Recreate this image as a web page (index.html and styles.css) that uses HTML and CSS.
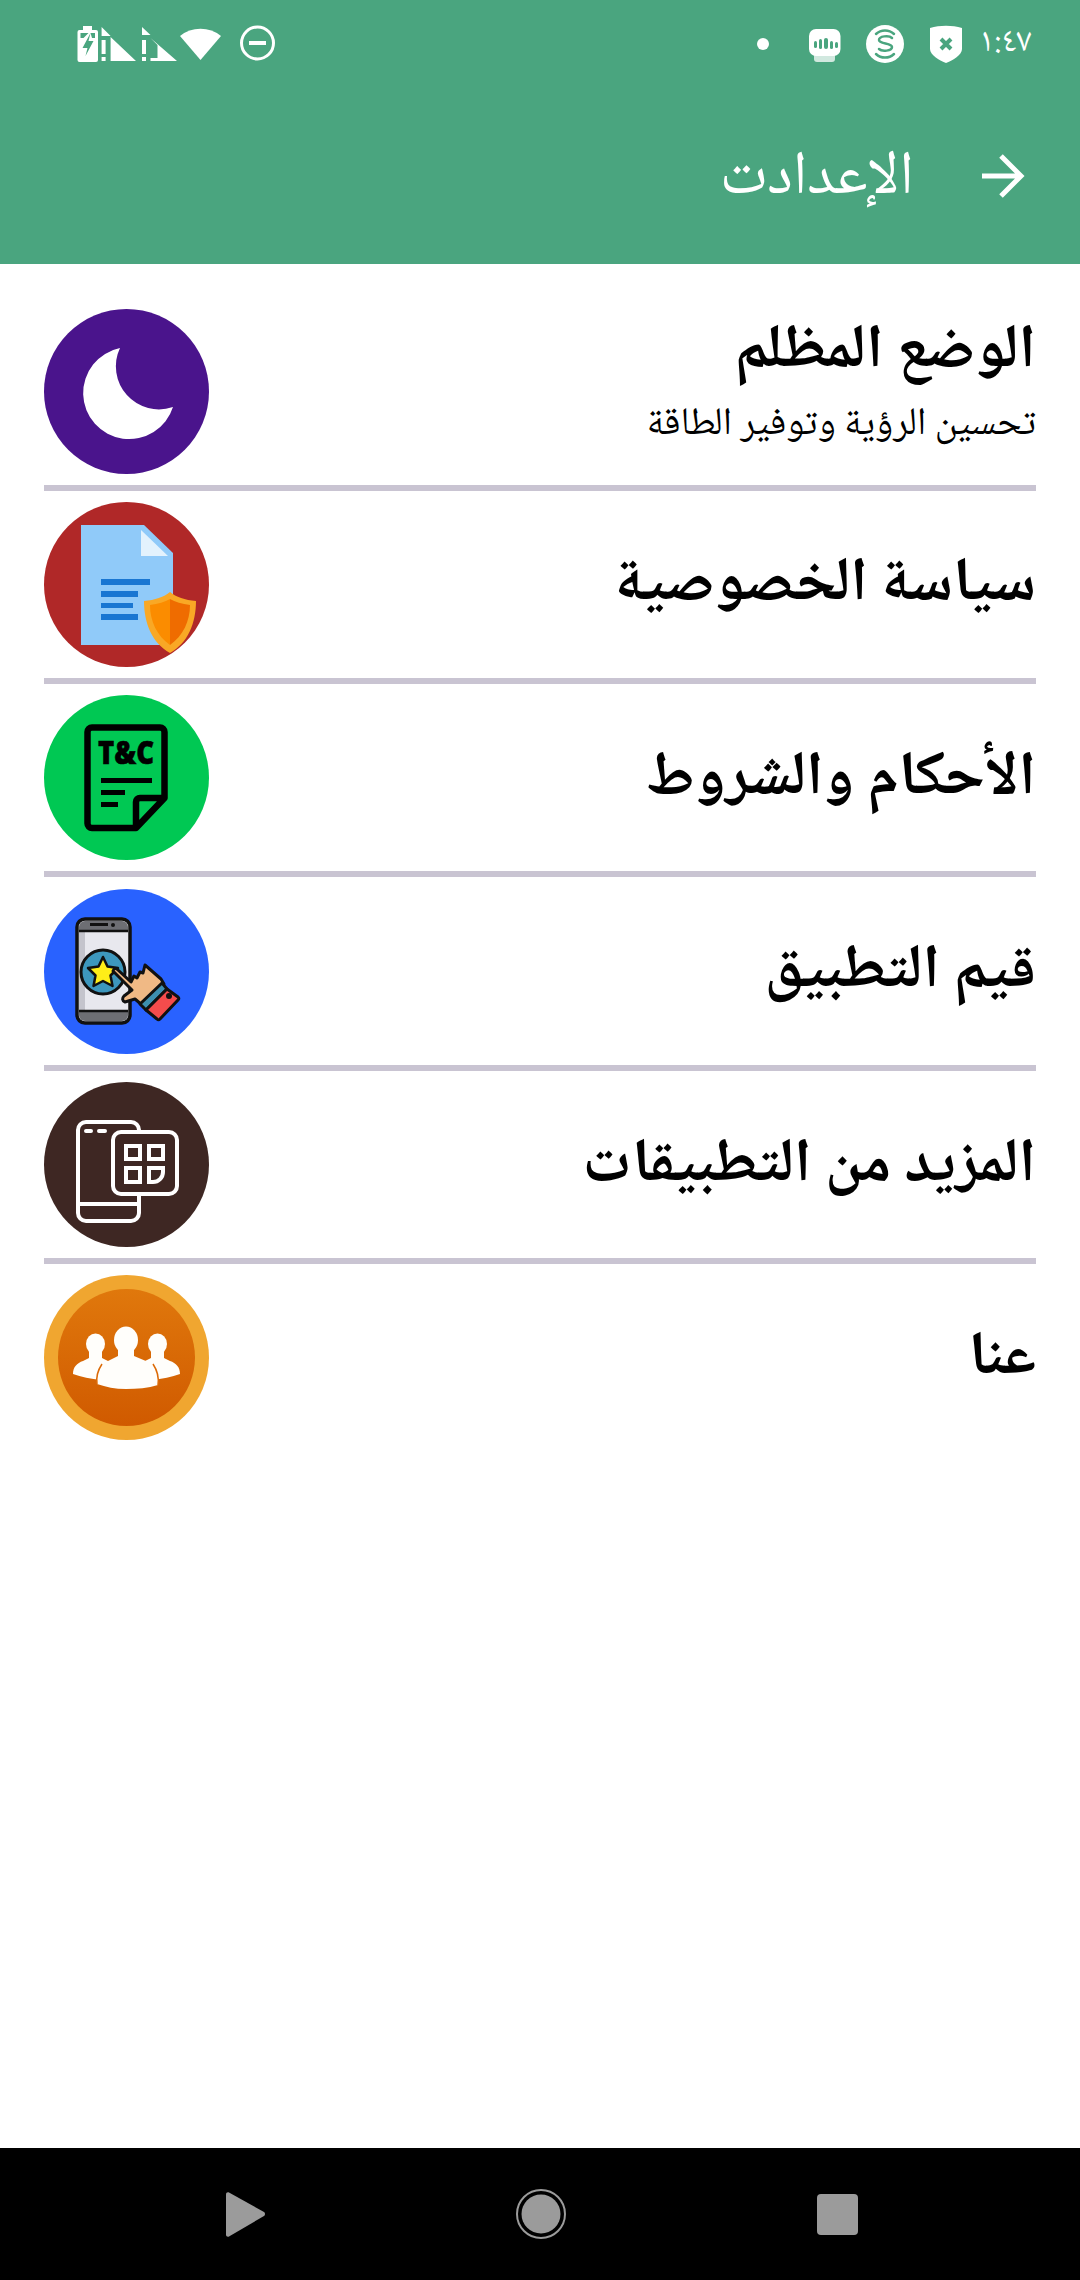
FILE: index.html
```html
<!DOCTYPE html>
<html lang="ar" dir="rtl">
<head>
<meta charset="utf-8">
<title>الإعدادت</title>
<link rel="stylesheet" href="styles.css">
</head>
<body>
<header class="top">
  <div class="status">
    <div class="status-right">
      <span class="time" dir="ltr">١:٤٧</span>
      <svg class="notifs" width="205" height="38" viewBox="757 25 205 38">
        <circle cx="763" cy="44" r="6" fill="#fff"/>
        <rect x="814" y="52" width="21" height="10" rx="3" fill="#fff" opacity=".75"/>
        <rect x="809" y="29" width="31.500" height="27" rx="7" fill="#fff"/>
        <g fill="#4aa57f"><rect x="814" y="41" width="3" height="7" rx="1.500"/><rect x="819" y="39" width="3" height="10" rx="1.500"/><rect x="824" y="38" width="4" height="11" rx="2"/><rect x="830" y="41" width="3" height="8" rx="1.500"/><rect x="835" y="42" width="3" height="6" rx="1.500"/></g>
        <circle cx="885" cy="44" r="19" fill="#fff"/>
        <g fill="none" stroke="#4aa57f" stroke-width="2.500" stroke-linecap="round"><path d="M876 34a13 13 0 0 1 18 0"/><path d="M876 54a13 13 0 0 0 18 0"/><path d="M892 38c-3-3-13-2-13 2s13 3 13 7-10 5-13 2"/></g>
        <path d="M930 28c10-3 22-3 32 0v21c0 6-10 12-16 14-6-2-16-8-16-14z" fill="#fff"/>
        <path d="M941 39l10 10M951 39l-10 10" stroke="#4aa57f" stroke-width="4" fill="none"/>
      </svg>
    </div>
    <svg class="sysicons" width="198" height="38" viewBox="77 25 198 38">
      <path d="M83 26h9v4h4a2 2 0 0 1 2 2v28a2 2 0 0 1-2 2H79.500a2 2 0 0 1-2-2V32a2 2 0 0 1 2-2H83z" fill="#fff"/>
      <path d="M80.500 33h8l-5 5h-3zM90.500 33h4.500v5h-3z" fill="#4aa57f"/>
      <path d="M90.500 33l-8 15h5l-2 8 8-15h-5z" fill="#4aa57f"/>
      <path d="M101.600 27l9 9h-9zM110.600 37l25.400 24h-25.400zM101.600 40h4v14h-4zM101.600 57h4v4h-4z" fill="#fff"/>
      <path d="M142 27l8.500 8H142zM142 40h4v14h-4zM142 57h4v4h-4zM150.500 38l26.500 23h-26.500v-3h7V45z" fill="#fff"/>
      <path d="M180 36a33 33 0 0 1 41 0l-20.500 24z" fill="#fff"/>
      <circle cx="257.500" cy="43" r="16" fill="none" stroke="#fff" stroke-width="3"/>
      <rect x="249" y="41" width="17" height="4" fill="#fff"/>
    </svg>
  </div>
  <div class="appbar">
    <svg class="back" width="44" height="46" viewBox="0 0 44 46"><path d="M1 23h39M20 3l20 20-20 20" fill="none" stroke="#fff" stroke-width="5"/></svg>
    <h1 class="title">الإعدادت</h1>
  </div>
</header>

<main class="list">
  <section class="row">
    <div class="texts texts-two">
      <h2 class="name">الوضع المظلم</h2>
      <p class="sub">تحسين الرؤية وتوفير الطاقة</p>
    </div>
    <svg class="badge" viewBox="0 0 165 165"><circle cx="82.500" cy="82.500" r="82.500" fill="#4a148c"/><path d="M76 39A46 46 0 1 0 129 98A43 43 0 0 1 76 39Z" fill="#fff"/></svg>
  </section>
  <hr class="sep">
  <section class="row">
    <div class="texts"><h2 class="name">سياسة الخصوصية</h2></div>
    <svg class="badge" viewBox="0 0 165 165">
      <circle cx="82.500" cy="82.500" r="82.500" fill="#b02828"/>
      <path d="M37 23h63l29 28v92H37z" fill="#90caf9"/>
      <path d="M97 28l27 26H97z" fill="#e3f2fd"/>
      <g fill="#1976d2"><rect x="57" y="77" width="49" height="6"/><rect x="57" y="89" width="37" height="6"/><rect x="57" y="101" width="32" height="5"/><rect x="57" y="112" width="37" height="6"/></g>
      <path d="M126 90c6 5 15 8 26 9 0 22-8 42-26 52-18-10-26-30-26-52 11-1 20-4 26-9z" fill="#f9a825"/>
      <path d="M126 97v46c-13-9-20-24-20-40 8-1 15-3 20-6z" fill="#fb8c00"/>
      <path d="M126 97v46c13-9 20-24 20-40-8-1-15-3-20-6z" fill="#ef6c00"/>
    </svg>
  </section>
  <hr class="sep">
  <section class="row">
    <div class="texts"><h2 class="name">الأحكام والشروط</h2></div>
    <svg class="badge" viewBox="0 0 165 165">
      <circle cx="82.500" cy="82.500" r="82.500" fill="#00c853"/>
      <path d="M92 133H48a4.500 4.500 0 0 1-4.500-4.500V37a4.500 4.500 0 0 1 4.500-4.500h68a4.500 4.500 0 0 1 4.500 4.500v66zM120.500 103H96a4 4 0 0 0-4 4v26" fill="none" stroke="#000" stroke-width="6.500" stroke-linejoin="round"/>
      <text class="tc" x="54" y="69" textLength="56" lengthAdjust="spacingAndGlyphs" dir="ltr">T&amp;C</text>
      <g fill="#000"><rect x="57" y="83" width="51" height="5"/><rect x="57" y="95" width="24" height="5"/><rect x="57" y="107" width="17" height="5"/></g>
    </svg>
  </section>
  <hr class="sep">
  <section class="row">
    <div class="texts"><h2 class="name">قيم التطبيق</h2></div>
    <svg class="badge" viewBox="0 0 165 165">
      <circle cx="82.500" cy="82.500" r="82.500" fill="#2962ff"/>
      <rect x="33" y="30" width="53" height="104" rx="8" fill="#e8e8ee" stroke="#111" stroke-width="3.500"/>
      <path d="M35 42v-4a6 6 0 0 1 6-6h37a6 6 0 0 1 6 6v4z" fill="#6d6e73"/>
      <path d="M35 122v4a6 6 0 0 0 6 6h37a6 6 0 0 0 6-6v-4z" fill="#6d6e73"/>
      <path d="M35 42v80h6V42z" fill="#c4c4cc"/>
      <path d="M35 42h49M35 122h49" stroke="#111" stroke-width="2.500"/>
      <rect x="46" y="34" width="18" height="3" fill="#111"/><circle cx="69" cy="36" r="2" fill="#111"/>
      <circle cx="59" cy="83" r="22" fill="#3d97bd" stroke="#111" stroke-width="3"/>
      <path d="M59 68l4.500 9.500 10.500 1.500-7.500 7.500 2 10.500-9.500-5-9.500 5 2-10.500-7.500-7.500 10.500-1.500z" fill="#ffee18" stroke="#111" stroke-width="2.500" stroke-linejoin="round"/>
      <path d="M69 82c1-3 3-3 5-1l13 12 3-6 3 2 3-6 3 1 2-8 16 14 3 5-22 21-7-6-10 3c-3-1-3-4-1-6l8-6z" fill="#f0b985" stroke="#111" stroke-width="3" stroke-linejoin="round"/>
      <path d="M118 94l5 6-21 21-6-6z" fill="#3d8fb0" stroke="#111" stroke-width="3" stroke-linejoin="round"/>
      <path d="M123 100l11 8c1 1 1 2 0 3l-18 19c-1 1-2 1-3 0l-11-9z" fill="#f44c4c" stroke="#111" stroke-width="3" stroke-linejoin="round"/>
      <circle cx="125" cy="107" r="3" fill="#111"/>
    </svg>
  </section>
  <hr class="sep">
  <section class="row">
    <div class="texts"><h2 class="name">المزيد من التطبيقات</h2></div>
    <svg class="badge" viewBox="0 0 165 165">
      <circle cx="82.500" cy="82.500" r="82.500" fill="#3e2723"/>
      <g fill="none" stroke="#fff" stroke-width="4" stroke-linecap="round">
        <path d="M95 49v-1a8 8 0 0 0-8-8H42a8 8 0 0 0-8 8v83a8 8 0 0 0 8 8h45a8 8 0 0 0 8-8v-17M34 122h61"/>
        <rect x="69" y="50" width="64" height="62" rx="8" fill="#3e2723"/>
        <path d="M42 49h5M55 49h6"/>
        <rect x="82" y="64" width="14" height="13"/><rect x="105" y="64" width="14" height="13"/><rect x="82" y="86" width="14" height="14"/>
        <path d="M105 86h14v4a10 10 0 0 1-10 10h-4z"/>
      </g>
    </svg>
  </section>
  <hr class="sep">
  <section class="row">
    <div class="texts"><h2 class="name">عنا</h2></div>
    <svg class="badge" viewBox="0 0 165 165">
      <defs><linearGradient id="amber" x1="0" y1="0" x2="0" y2="1"><stop offset="0" stop-color="#e0780c"/><stop offset="1" stop-color="#d05a00"/></linearGradient></defs>
      <circle cx="82.500" cy="82.500" r="82.500" fill="#f0a630"/>
      <circle cx="82.500" cy="82.500" r="68.500" fill="url(#amber)"/>
      <g fill="#fffefb">
        <ellipse cx="51.500" cy="69" rx="9.500" ry="10.500"/>
        <ellipse cx="113.500" cy="69" rx="9.500" ry="10.500"/>
        <path d="M45 74h13v9l12 6c-8 3-12 9-13 16-10-1-20-3-28-6 0-7 4-11 10-13l6-3z"/>
        <path d="M120 74h-13v9l-12 6c8 3 12 9 13 16 10-1 20-3 28-6 0-7-4-11-10-13l-6-3z"/>
        <ellipse cx="82" cy="65" rx="12" ry="13.500"/>
        <path d="M74 70h16v11l19 8c4 6 6 14 5 21-10 3-21 4-32 4s-20-2-29-5c-1-7 1-14 5-20l16-8z"/>
      </g>
      <path d="M53 109c-1-7 1-14 5-20M114 110c1-7-1-15-5-21" fill="none" stroke="#dc6a06" stroke-width="1.500"/>
    </svg>
  </section>
</main>

<nav class="navbar" dir="ltr">
  <svg width="39" height="45" viewBox="0 0 39 45"><path d="M3 .5L38 20a2.500 2.500 0 0 1 0 4L3 44.500c-1.500.5-3 0-3-2V2.500C0 .5 1.500 0 3 .5z" fill="#9b9b9b"/></svg>
  <svg width="50" height="50" viewBox="0 0 50 50"><circle cx="25" cy="25" r="24" fill="none" stroke="#9b9b9b" stroke-width="2"/><circle cx="25" cy="25" r="19.500" fill="#9b9b9b"/></svg>
  <div class="nav-square"></div>
</nav>
</body>
</html>
```
FILE: styles.css
```css
* { box-sizing: border-box; }
html, body { margin: 0; padding: 0; }
body {
  width: 1080px;
  height: 2280px;
  display: flex;
  flex-direction: column;
  background: #fff;
  font-family: "Noto Naskh Arabic", "Noto Sans", sans-serif;
  color: #000;
}
.top { background: #4aa57f; height: 264px; color: #fff; flex: none; }
.status {
  height: 88px;
  padding: 25px 50px 0 77px;
  display: flex;
  justify-content: space-between;
  align-items: flex-start;
}
.status-right { display: flex; align-items: flex-start; gap: 17px; }
.time { font-size: 34px; line-height: 38px; width: 51px; white-space: nowrap; }
.appbar {
  height: 176px;
  padding: 0 55px 0 0;
  display: flex;
  align-items: flex-start;
  gap: 67px;
}
.back { margin-top: 65px; display: block; }
.title { margin: 0; padding-top: 52px; font-size: 61.500px; line-height: 80px; font-weight: 400; }
.list { flex: 1; padding: 44.500px 44px 0; }
.row { display: flex; justify-content: space-between; align-items: center; height: 165px; }
.texts { padding-top: 6px; }
.texts-two { padding: 0 0 17px; }
.badge { width: 165px; height: 165px; display: block; flex: none; }
.name { margin: 0; font-size: 61.500px; line-height: 80px; font-weight: 700; }
.sub { margin: 7px 0 0; font-size: 38.700px; line-height: 50px; font-weight: 400; }
.sep { border: 0; height: 6px; margin: 11.200px 0; background: #c9c4d2; }
.tc { font-family: "Open Sans", sans-serif; font-weight: 800; font-size: 32px; fill: #000; stroke: #000; stroke-width: .6px; direction: ltr; }
.navbar {
  height: 132px;
  flex: none;
  background: #000;
  display: flex;
  align-items: center;
  padding: 0 222px 0 226px;
  justify-content: space-between;
}
.nav-square { width: 41px; height: 41px; border-radius: 4px; background: #9b9b9b; }
```
